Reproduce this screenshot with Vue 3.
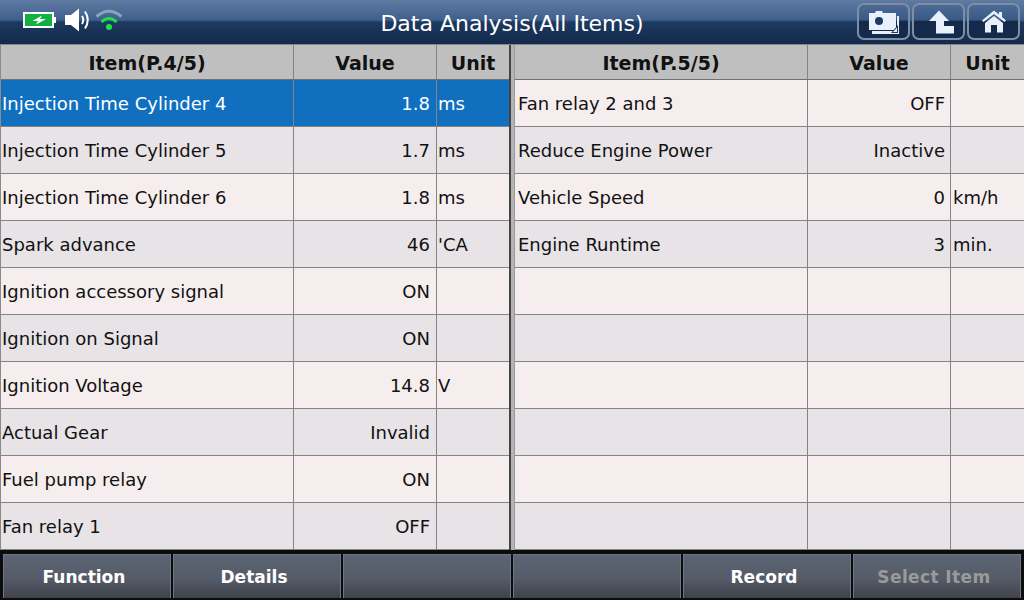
<template>
  <div class="screen">
    <header class="top-bar">
      <div class="status-icons">
        <svg class="battery" width="34" height="16" viewBox="0 0 34 16">
          <rect x="1" y="1" width="29" height="14" fill="#12b040" stroke="#fff" stroke-width="2" />
          <rect x="30" y="5" width="3" height="6" fill="#fff" />
          <path d="M19 3.5 L9.5 9 H15 L13 12.5 L23 7 H17 Z" fill="#fff" />
        </svg>
        <svg class="speaker" width="28" height="24" viewBox="0 0 28 24">
          <path d="M1 7 H7 L15 0.5 V23.5 L7 17 H1 Z" fill="#fff" />
          <path d="M18 8 Q20.5 12 18 16" fill="none" stroke="#fff" stroke-width="2" />
          <path d="M21 3.5 Q26.5 12 21 20.5" fill="none" stroke="#fff" stroke-width="2" />
        </svg>
        <svg class="wifi" width="28" height="24" viewBox="0 0 28 24">
          <path d="M1.5 8.5 Q14 -2 26.5 8.5" fill="none" stroke="#8ba3bd" stroke-width="3" />
          <path d="M6.5 14 Q14 7 21.5 14" fill="none" stroke="#1fe04a" stroke-width="3" />
          <circle cx="14" cy="19" r="3" fill="#1fe04a" />
        </svg>
      </div>
      <div class="title">Data Analysis(All Items)</div>
      <div class="top-buttons">
        <button class="icon-btn">
          <svg width="32" height="28" viewBox="0 0 32 28">
            <path d="M4 23 V26 H31 V8 H29 V23 Z" fill="#e8f1fb" />
            <path d="M1 5 H7 L8 3 H14 L15 5 H28 V22 H1 Z" fill="#e8f1fb" />
            <circle cx="11" cy="13" r="4" fill="#1d3a63" />
            <path d="M23 25 L30 17 V25 Z" fill="#1d3a63" />
            <path d="M25 24 L29 19.5 V24 Z" fill="#e8f1fb" />
          </svg>
        </button>
        <button class="icon-btn">
          <svg width="32" height="28" viewBox="0 0 32 28">
            <path d="M16 2.5 L6 13 H13 V25.5 H31 V18 H21 V13 H26 Z" fill="#e8f1fb" />
          </svg>
        </button>
        <button class="icon-btn">
          <svg width="32" height="28" viewBox="0 0 32 28">
            <path d="M16 2.5 L21 6.5 V4 H24 V9 L28 12.5 L26.5 14 L16 6 L5.5 14 L4 12.5 Z" fill="#e8f1fb" />
            <path d="M16 8 L25 15 V24.5 H19 V17 H13 V24.5 H7 V15 Z" fill="#e8f1fb" />
          </svg>
        </button>
      </div>
    </header>

    <main class="tables">
      <section v-for="(page, p) in pages" :key="p" class="table">
        <div class="row head">
          <div class="cell center">{{ page.title }}</div>
          <div class="cell center">Value</div>
          <div class="cell center">Unit</div>
        </div>
        <div
          v-for="(row, i) in page.rows"
          :key="i"
          class="row"
          :class="[i % 2 ? 'even' : 'odd', { selected: p === 0 && i === 0 }]"
        >
          <div class="cell name">{{ row[0] }}</div>
          <div class="cell value">{{ row[1] }}</div>
          <div class="cell unit">{{ row[2] }}</div>
        </div>
      </section>
    </main>

    <footer class="bottom-bar">
      <button v-for="b in buttons" :key="b.label" class="func-btn" :class="{ disabled: b.disabled }">
        {{ b.label }}
      </button>
    </footer>
  </div>
</template>

<script setup>
const blank = ['', '', '']

const pages = [
  {
    title: 'Item(P.4/5)',
    rows: [
      ['Injection Time Cylinder 4', '1.8', 'ms'],
      ['Injection Time Cylinder 5', '1.7', 'ms'],
      ['Injection Time Cylinder 6', '1.8', 'ms'],
      ['Spark advance', '46', "'CA"],
      ['Ignition accessory signal', 'ON', ''],
      ['Ignition on Signal', 'ON', ''],
      ['Ignition Voltage', '14.8', 'V'],
      ['Actual Gear', 'Invalid', ''],
      ['Fuel pump relay', 'ON', ''],
      ['Fan relay 1', 'OFF', '']
    ]
  },
  {
    title: 'Item(P.5/5)',
    rows: [
      ['Fan relay 2 and 3', 'OFF', ''],
      ['Reduce Engine Power', 'Inactive', ''],
      ['Vehicle Speed', '0', 'km/h'],
      ['Engine Runtime', '3', 'min.'],
      blank,
      blank,
      blank,
      blank,
      blank,
      blank
    ]
  }
]

const buttons = [
  { label: 'Function' },
  { label: 'Details' },
  { label: ' ' },
  { label: '  ' },
  { label: 'Record' },
  { label: 'Select Item', disabled: true }
]
</script>

<style scoped>
.screen {
  width: 1024px;
  height: 600px;
  overflow: hidden;
  display: flex;
  flex-direction: column;
  background: #0c0c0e;
  font-family: 'DejaVu Sans', Verdana, sans-serif;
  font-size: 18px;
  color: #111;
}

.top-bar {
  height: 44px;
  flex-shrink: 0;
  display: grid;
  grid-template-columns: 1fr auto 1fr;
  align-items: center;
  background: linear-gradient(#5f7ba3 0, #3f5f8c 20px, #1c3a60 22px, #14294a 44px);
  border-bottom: 1px solid #7d8794;
  box-sizing: content-box;
}

.status-icons {
  display: flex;
  align-items: center;
  margin-left: 23px;
  padding-bottom: 4px;
}

.speaker {
  margin-left: 7px;
}

.wifi {
  margin-left: 3px;
}

.title {
  color: #fff;
  font-size: 22px;
  padding-top: 3px;
}

.top-buttons {
  display: flex;
  justify-content: flex-end;
  gap: 2px;
  margin-right: 4px;
  padding-bottom: 1px;
}

.icon-btn {
  width: 53px;
  height: 37px;
  padding: 0;
  display: flex;
  align-items: center;
  justify-content: center;
  border: 2px solid #7f8ea2;
  border-radius: 7px;
  background: linear-gradient(#4b6a96 0, #3a5a86 45%, #15294b 50%, #142a4c 100%);
}

.tables {
  height: 505px;
  flex-shrink: 0;
  display: flex;
  background: #b4b4b4;
}

.table {
  width: 509px;
  flex-shrink: 0;
}

.table:first-child {
  width: 511px;
  border-left: 1px solid #8a8a8a;
  border-right: 2px solid #444;
  box-sizing: border-box;
  margin-right: 4px;
}

.table:first-child .row {
  grid-template-columns: 293px 143px 72px;
}

.table:first-child .value {
  padding-right: 6px;
}

.table:first-child .unit {
  padding-left: 1px;
}

.table:last-child {
  box-shadow: -1px 0 0 #9a9a9a;
}

.row {
  display: grid;
  grid-template-columns: 293px 143px 73px;
  height: 47px;
  box-sizing: border-box;
  border-bottom: 1px solid #848484;
}

.head {
  height: 35px;
  background: #bfbfbf;
  font-weight: bold;
  font-size: 19px;
  border-bottom-color: #707070;
}

.odd {
  background: #f6eeee;
}

.even {
  background: #e7e3e6;
}

.selected {
  background: #1070bf;
  color: #fff;
}

.cell {
  display: flex;
  align-items: center;
  padding: 1px 2px 0;
  white-space: nowrap;
  box-sizing: border-box;
  border-right: 1px solid #848484;
}

.cell:last-child {
  border-right: 0;
}

.name {
  padding-left: 1px;
}

.table:last-child .name {
  padding-left: 3px;
}

.center {
  justify-content: center;
}

.value {
  justify-content: flex-end;
  padding-right: 5px;
  padding-left: 0;
}

.bottom-bar {
  flex: 1;
  display: flex;
  gap: 2px;
  padding: 4px 3px 2px;
  background: #0c0c0e;
}

.func-btn {
  flex: 1;
  min-width: 0;
  padding: 0 6px 0 0;
  border: 1px solid #6f7680;
  border-bottom: 0;
  background: linear-gradient(#5c6473 0, #555b68 55%, #3f424a 100%);
  color: #fff;
  font-family: inherit;
  font-size: 17px;
  font-weight: bold;
}

.func-btn.disabled {
  color: #9a9a9a;
  letter-spacing: 0.4px;
}
</style>
